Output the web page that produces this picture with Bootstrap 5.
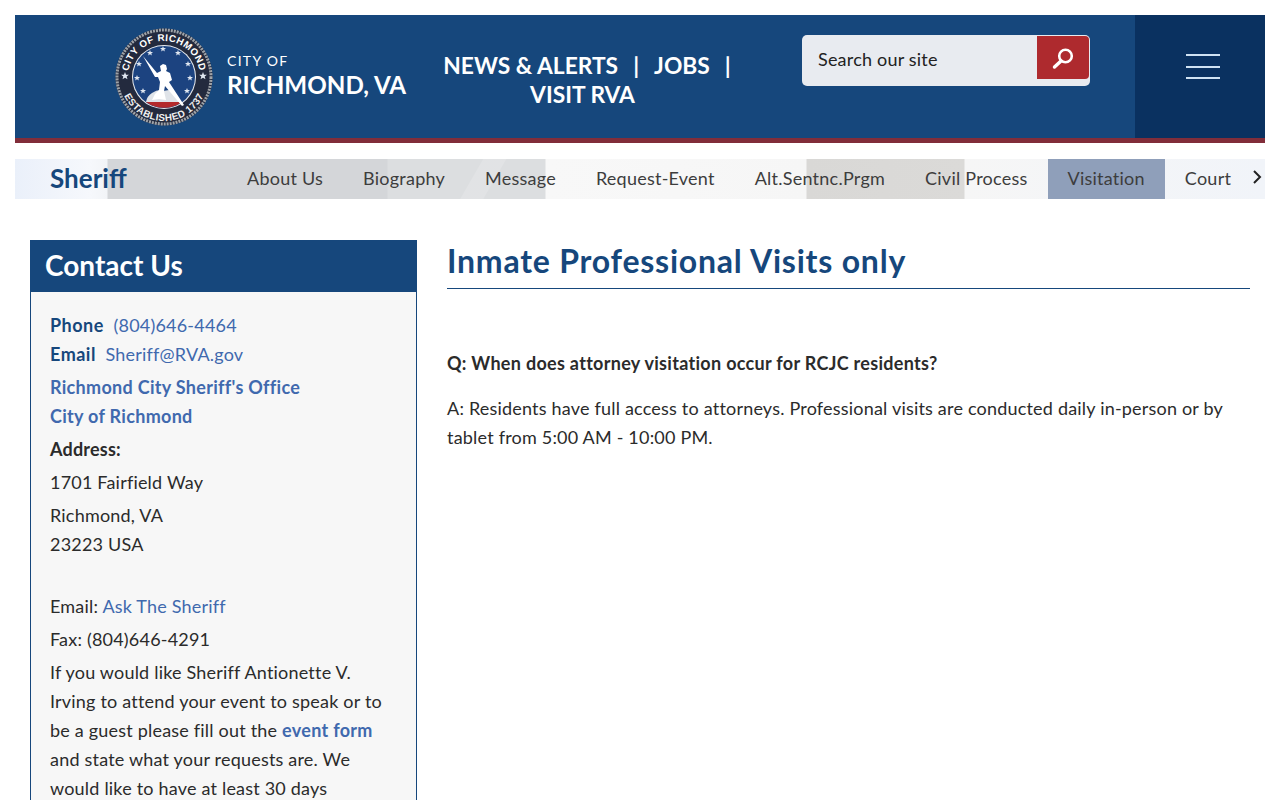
<!doctype html>
<html lang="en"><head><meta charset="utf-8"><title>Inmate Professional Visits only</title>
<link href="https://cdn.jsdelivr.net/npm/bootstrap@5.3.0/dist/css/bootstrap.min.css" rel="stylesheet">
<style>
html,body{height:800px;overflow:hidden}
body{font-family:"Lato","Noto Sans",sans-serif;font-size:18px;line-height:29px;color:#2b2b2b;background:#fff;letter-spacing:.2px}
a{text-decoration:none;color:#4069ae}
.page-pad{padding:15px 15px 0}
.top-bar{height:128px;background:#16477c;border-bottom:5px solid #812d3a}
.brand-zone{width:388px;padding:13px 0 0 100px;gap:14px}
.brand-text{color:#fff;line-height:1;padding-top:26px}
.brand-small{font-size:14px;letter-spacing:1.3px;margin-bottom:5px}
.brand-big{font-size:24.2px;font-weight:700;letter-spacing:0}
.top-links{width:359px;padding-top:36px;text-align:center;font-size:22.8px;font-weight:700;line-height:29px;color:#fff;letter-spacing:0}
.top-links a{color:#fff}
.line-one{padding-left:24px}
.top-links .sepa{font-weight:700;margin:0 15px}
.search-zone{width:333px;padding:20px 0 0 0;margin-left:auto}
.search-box{width:288px;height:51px;background:#e8ebf0;border-radius:5px;overflow:hidden;border:0}
.search-label{font-size:18px;color:#222;padding:10px 0 0 16px;flex:1}
.search-go{width:52px;height:43px;background:#ae2a2e;border-radius:0 4px 4px 0;margin:1px 1px 0 0}
.burger{width:130px;background:#0a3160;height:123px;gap:9.5px;padding:39px 0 0 51px}
.burger i{display:block;width:34px;height:2px;background:#cfe2f3}
.sub-bar{height:40px;margin-top:16px;background:
linear-gradient(120deg,transparent 0,transparent 405px,rgba(255,255,255,.16) 406px,rgba(255,255,255,.16) 425px,transparent 426px),
linear-gradient(90deg,#eaf0fa 0,#f6f8fc 75px,#f2f4f7 92px,#d4d6d9 93px,#d4d6d9 372px,#dcdee0 373px,#dcdee0 530px,#f8f8f8 531px,#f6f6f6 791px,#d9d8d6 792px,#dbdad8 949px,#f6f6f6 950px,#f1f4f9 1250px)}
.sub-title{flex:none;width:212px;padding-left:35px;font-size:26px;font-weight:700;color:#16477c;line-height:39px;letter-spacing:0}
.sub-item{flex:none;padding:0 20px;line-height:39px;color:#3d3d3d;font-size:18px;white-space:nowrap;height:40px;letter-spacing:.24px}
.sub-item.is-on{background:#8f9fba}
.sub-next{flex:none;margin-left:auto;padding:0 3px 4px 0;height:40px}
.main-row{padding:41px 30px 0;gap:30px}
.side-col{width:387px;flex:none}
.side-head{background:#16477c;color:#fff;font-size:28px;font-weight:700;height:52px;line-height:50px;padding-left:15px;letter-spacing:0}
.side-body{background:#f7f7f7;border:1px solid #16477c;border-top:0;padding:19px 29px 0 19px;height:520px}
.side-body p{margin:0 0 4px}
.lab{color:#16477c;font-weight:700;letter-spacing:.5px}
.strong-link{font-weight:700;letter-spacing:.3px}
.gap-after{margin-bottom:33px}
.page-col{flex:1}
.page-title{font-size:32px;font-weight:700;color:#16477c;line-height:42px;margin:0;padding-bottom:6px;border-bottom:1px solid #16477c;letter-spacing:.78px}
.q-line{margin:60px 0 16px;font-weight:700;letter-spacing:.3px}
</style></head><body>
<div class="page-pad">
<header class="top-bar d-flex">
 <div class="brand-zone d-flex align-items-start flex-shrink-0">
  <svg width="98" height="98" viewBox="0 0 98 98" class="flex-shrink-0">
   <defs><path id="arcTop" d="M13 49a36 36 0 0 1 72 0"/><path id="arcBot" d="M5 49a44 44 0 0 0 88 0"/>
   <polygon id="st" points="0,-3 .8,-1 3,-.9 1.3,.4 1.9,2.5 0,1.3 -1.9,2.5 -1.3,.4 -3,-.9 -.8,-1" fill="#dfe6f0"/></defs>
   <circle cx="49" cy="49" r="48.5" fill="#232a3e"/>
   <circle cx="49" cy="49" r="47" fill="none" stroke="#9ea3a8" stroke-width="3" stroke-dasharray="2 1"/>
   <circle cx="49" cy="49" r="32" fill="#e9ecf0"/>
   <circle cx="49" cy="49" r="31" fill="#1c4380"/>
   <path d="M31 74H67A31 31 0 0 1 31 74z" fill="#b42a2c"/>
   <path d="M31 74q1-6 6-9 4-3 9-3l2 1 6-1 9 8 2 4z" fill="#dfe3e8"/>
   <path d="M28 28l14 17 4-2-1-5 3-2 3 1 1 4-1 2 4 2 2 7-3 2 15 23-2 1-17-20-1 5 2 9-7-1-7 1 3-6 4-4 1-8-2-5-3 0z" fill="#fff"/>
   <text font-family="Liberation Sans,sans-serif" font-size="9.8" font-weight="700" fill="#fff" letter-spacing=".4"><textPath href="#arcTop" startOffset="50%" text-anchor="middle">CITY OF RICHMOND</textPath></text>
   <text font-family="Liberation Sans,sans-serif" font-size="9.8" font-weight="700" fill="#f0f0f0" letter-spacing=".4"><textPath href="#arcBot" startOffset="50%" text-anchor="middle">ESTABLISHED 1737</textPath></text>
   <use href="#st" transform="translate(10 48) scale(1.3)"/><use href="#st" transform="translate(88 48) scale(1.3)"/>
   <use href="#st" x="48" y="21"/><use href="#st" x="35" y="25"/><use href="#st" x="63" y="25"/><use href="#st" x="24" y="36"/><use href="#st" x="73" y="36"/><use href="#st" x="22" y="50"/><use href="#st" x="75" y="50"/><use href="#st" x="72" y="63"/><use href="#st" x="28" y="63"/>
  </svg>
  <div class="brand-text"><div class="brand-small">CITY OF</div><div class="brand-big text-nowrap">RICHMOND, VA</div></div>
 </div>
 <nav class="top-links flex-shrink-0"><div class="line-one text-nowrap"><a href="#">NEWS &amp; ALERTS</a><span class="sepa">|</span><a href="#">JOBS</a><span class="sepa">|</span></div><a href="#">VISIT RVA</a></nav>
 <div class="search-zone">
  <div class="search-box d-flex align-items-start">
   <div class="search-label">Search our site</div>
   <div class="search-go d-flex align-items-center justify-content-center">
    <svg width="24" height="24" viewBox="0 0 24 24" fill="none" stroke="#fff"><circle cx="14.5" cy="10" r="6.3" stroke-width="2.6"/><path d="M10 15 3.5 21" stroke-width="3.4" stroke-linecap="round"/></svg>
   </div>
  </div>
 </div>
 <div class="burger d-flex flex-column"><i></i><i></i><i></i></div>
</header>
<nav class="sub-bar d-flex">
 <div class="sub-title">Sheriff</div>
 <a class="sub-item" href="#">About Us</a><a class="sub-item" href="#">Biography</a><a class="sub-item" href="#">Message</a><a class="sub-item" href="#">Request-Event</a><a class="sub-item" href="#">Alt.Sentnc.Prgm</a><a class="sub-item" href="#">Civil Process</a><a class="sub-item is-on" href="#">Visitation</a><a class="sub-item" href="#">Court</a>
 <div class="sub-next d-flex align-items-center"><svg width="12" height="16" viewBox="0 0 12 16" fill="none" stroke="#222" stroke-width="2"><path d="M3 2l6 6-6 6"/></svg></div>
</nav>
</div>
<main class="main-row d-flex">
 <aside class="side-col">
  <div class="side-head">Contact Us</div>
  <div class="side-body">
   <div><span class="lab">Phone</span>&nbsp; <a href="#">(804)646-4464</a></div>
   <p><span class="lab">Email</span>&nbsp; <a href="#">Sheriff@RVA.gov</a></p>
   <div><a class="strong-link" href="#">Richmond City Sheriff's Office</a></div>
   <p><a class="strong-link" href="#">City of Richmond</a></p>
   <p class="fw-bold">Address:</p>
   <p>1701 Fairfield Way</p>
   <div>Richmond, VA</div>
   <div class="gap-after">23223 USA</div>
   <p>Email: <a href="#">Ask The Sheriff</a></p>
   <p>Fax: (804)646-4291</p>
   <div>If you would like Sheriff Antionette V. Irving to attend your event to speak or to be a guest please fill out the <a class="strong-link" href="#">event form</a> and state what your requests are. We would like to have at least 30 days</div>
  </div>
 </aside>
 <section class="page-col">
  <h1 class="page-title">Inmate Professional Visits only</h1>
  <p class="q-line">Q: When does attorney visitation occur for RCJC residents?</p>
  <p>A: Residents have full access to attorneys. Professional visits are conducted daily in-person or by tablet from 5:00 AM - 10:00 PM.</p>
 </section>
</main>
</body></html>
